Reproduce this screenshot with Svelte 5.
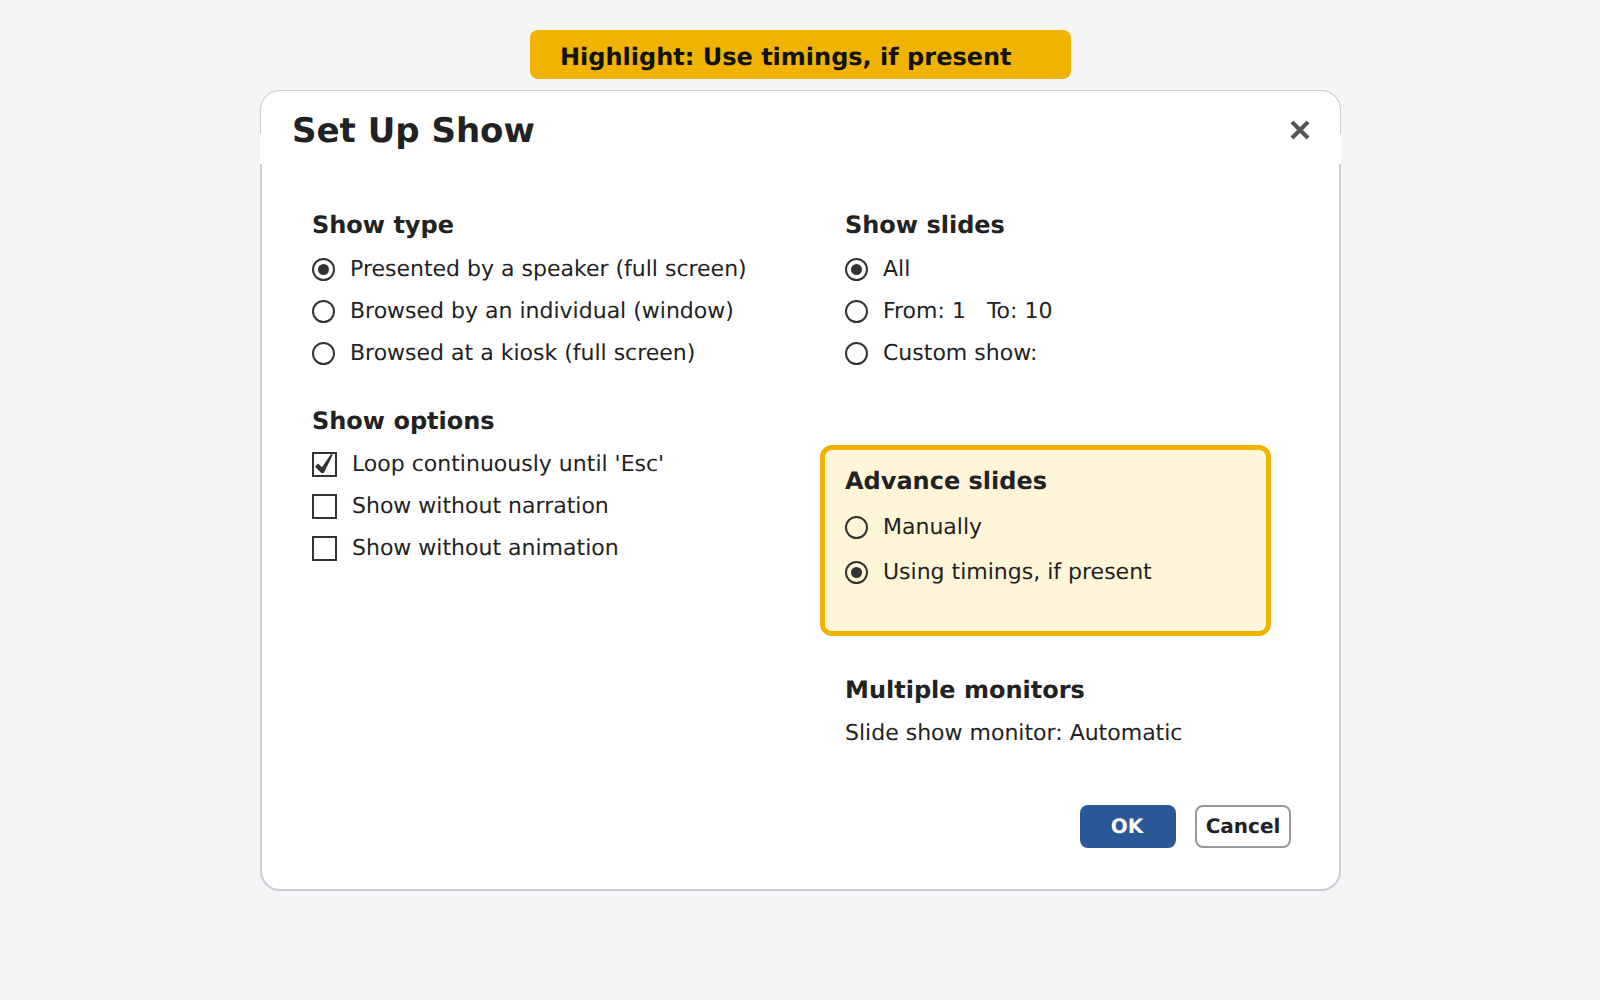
<script>
	const showType = [
		{ label: 'Presented by a speaker (full screen)', on: true },
		{ label: 'Browsed by an individual (window)', on: false },
		{ label: 'Browsed at a kiosk (full screen)', on: false }
	];
	const showSlides = [
		{ label: 'All', on: true },
		{ label: 'From: 1\u00a0\u00a0\u00a0To: 10', on: false },
		{ label: 'Custom show:', on: false }
	];
	const showOptions = [
		{ label: "Loop continuously until 'Esc'", on: true },
		{ label: 'Show without narration', on: false },
		{ label: 'Show without animation', on: false }
	];
	const advance = [
		{ label: 'Manually', on: false },
		{ label: 'Using timings, if present', on: true }
	];
</script>

<div class="page">
	<div class="banner">Highlight: Use timings, if present</div>

	<div class="dialog">
		<div class="titlebar">
			<h1>Set Up Show</h1>
			<svg class="close" width="22" height="22" viewBox="0 0 22 22">
				<path d="M3 3 L19 19 M19 3 L3 19" stroke="#555" stroke-width="4" fill="none" />
			</svg>
		</div>

		<div class="body">
			<div class="col left">
				<section>
					<h2>Show type</h2>
					{#each showType as item}
						<div class="row">
							<span class="radio" class:on={item.on}></span>
							<span class="label">{item.label}</span>
						</div>
					{/each}
				</section>

				<section class="options">
					<h2>Show options</h2>
					{#each showOptions as item}
						<div class="row">
							<span class="check">
								{#if item.on}
									<svg width="25" height="25" viewBox="0 0 25 25">
										<path d="M3 14.8 L6.2 11.5 L10 15.2 L19 2 L20.8 2.8 L11.8 21 L9.2 21 Z" fill="#333" />
									</svg>
								{/if}
							</span>
							<span class="label">{item.label}</span>
						</div>
					{/each}
				</section>
			</div>

			<div class="col right">
				<section>
					<h2>Show slides</h2>
					{#each showSlides as item}
						<div class="row">
							<span class="radio" class:on={item.on}></span>
							<span class="label">{item.label}</span>
						</div>
					{/each}
				</section>

				<section class="advance">
					<h2>Advance slides</h2>
					{#each advance as item}
						<div class="row">
							<span class="radio" class:on={item.on}></span>
							<span class="label">{item.label}</span>
						</div>
					{/each}
				</section>

				<section class="monitors">
					<h2>Multiple monitors</h2>
					<p>Slide show monitor: Automatic</p>
				</section>
			</div>
		</div>

		<div class="footer">
			<button class="ok">OK</button>
			<button class="cancel">Cancel</button>
		</div>
	</div>
</div>

<style>
	:global(body) {
		background: #f4f5f7;
		font-family: 'DejaVu Sans', sans-serif;
		color: #222;
		text-rendering: geometricPrecision;
	}
	.page {
		width: 1600px;
		height: 1000px;
		display: flex;
		flex-direction: column;
		align-items: center;
		padding: 30px 0 0 1px;
		box-sizing: border-box;
	}
	.banner {
		width: 541px;
		height: 49px;
		box-sizing: border-box;
		padding: 12px 0 0 30px;
		background: #f0b400;
		border-radius: 8px;
		font-size: 24px;
		line-height: 30px;
		font-weight: 700;
		color: #111;
	}
	.dialog {
		margin-top: 11px;
		width: 1081px;
		height: 801px;
		box-sizing: border-box;
		background: #fff;
		border: 2px solid #c9ccd4;
		border-radius: 20px;
		display: flex;
		flex-direction: column;
	}
	.titlebar {
		position: relative;
		display: flex;
		align-items: center;
		justify-content: space-between;
		height: 73px;
		margin: -1px -1px 0;
		padding: 0 29px 0 31px;
		box-sizing: border-box;
		background: #fff;
		border-radius: 19px 19px 0 0;
	}
	/* white strip that runs over the side borders */
	.titlebar::after {
		content: '';
		position: absolute;
		left: -1px;
		right: -1px;
		top: 43px;
		bottom: 0;
		background: #fff;
	}
	h1 {
		position: relative;
		z-index: 1;
		margin: 6px 0 0;
		font-size: 34px;
		line-height: 40px;
		font-weight: 700;
	}
	.close {
		position: relative;
		z-index: 1;
		margin-top: 4px;
	}
	.body {
		flex: 1;
		display: flex;
		padding: 0 48px 0 50px;
	}
	.col {
		display: flex;
		flex-direction: column;
		padding-top: 46px;
	}
	.left {
		width: 533px;
	}
	.right {
		width: 440px;
	}
	h2 {
		margin: 0 0 8px;
		font-size: 24px;
		line-height: 30px;
		font-weight: 700;
	}
	.row {
		display: flex;
		align-items: center;
		gap: 15px;
		height: 42px;
		font-size: 22px;
	}
	.options {
		margin-top: 32px;
	}
	.options h2 {
		margin-bottom: 7px;
	}
	.radio {
		flex: none;
		width: 23px;
		height: 23px;
		box-sizing: border-box;
		border: 2px solid #333;
		border-radius: 50%;
		position: relative;
	}
	.radio.on::after {
		content: '';
		position: absolute;
		inset: 4px;
		background: #333;
		border-radius: 50%;
	}
	.check {
		flex: none;
		position: relative;
		width: 25px;
		height: 25px;
		box-sizing: border-box;
		border: 2px solid #333;
	}
	.check svg {
		position: absolute;
		left: -2px;
		top: -2px;
	}
	.advance {
		margin: 71px 0 0 -25px;
		padding: 16px 20px 0;
		height: 191px;
		width: 451px;
		box-sizing: border-box;
		background: #fff5d9;
		border: 5px solid #f0b400;
		border-radius: 12px;
	}
	.advance h2 {
		margin-bottom: 9px;
	}
	.advance .row {
		height: 45px;
	}
	.monitors {
		margin-top: 39px;
	}
	p {
		margin: 2px 0 0;
		font-size: 22px;
		line-height: 42px;
	}
	.footer {
		display: flex;
		justify-content: flex-end;
		gap: 19px;
		padding: 0 48px 41px 0;
	}
	button {
		width: 96px;
		height: 43px;
		padding: 0 0 2px;
		font-family: inherit;
		font-size: 20px;
		font-weight: 700;
		border-radius: 8px;
		box-sizing: border-box;
		text-rendering: geometricPrecision;
	}
	.ok {
		padding-right: 2px;
		background: #2b5797;
		border: none;
		color: #fff;
	}
	.cancel {
		background: #fff;
		border: 2px solid #94979e;
		color: #222;
	}
</style>
